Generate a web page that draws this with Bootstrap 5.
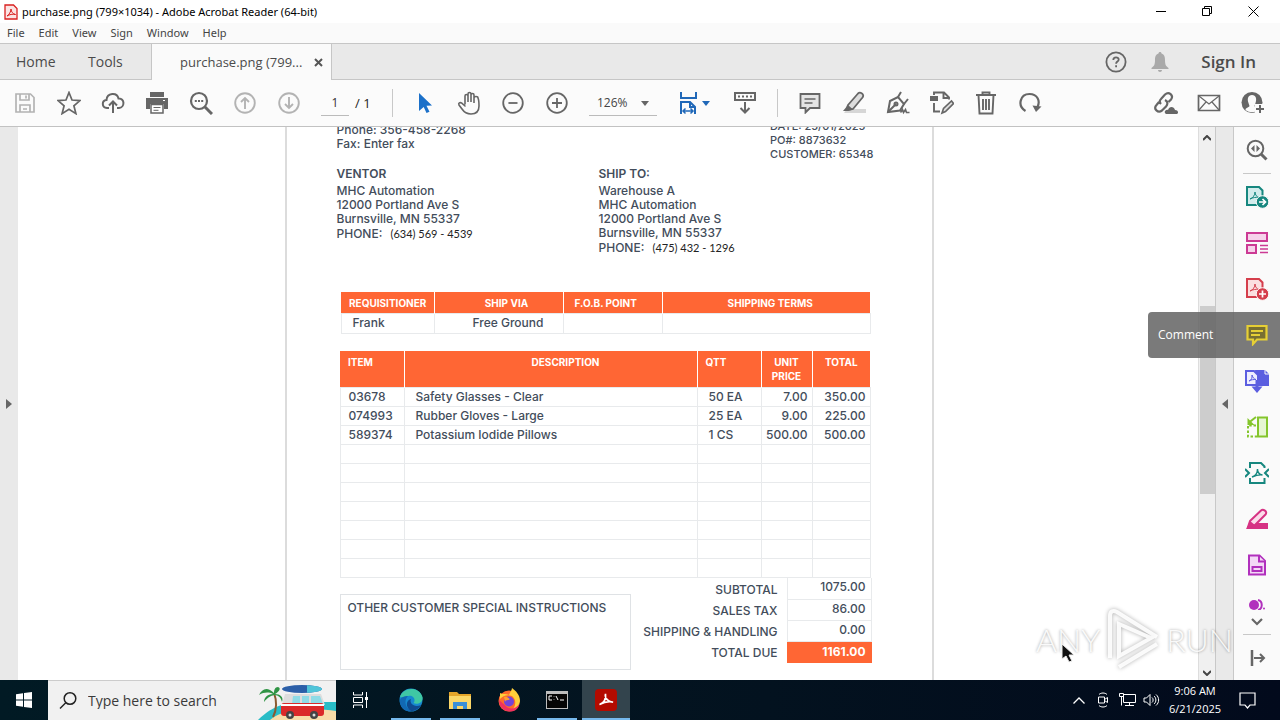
<!DOCTYPE html>
<html lang="en">
<head>
<meta charset="utf-8">
<meta name="viewport" content="width=device-width, initial-scale=1">
<title>purchase.png - Adobe Acrobat Reader</title>
<link href="https://cdn.jsdelivr.net/npm/bootstrap@5.3.0/dist/css/bootstrap.min.css" rel="stylesheet">
<style>
  body { font-family: "Open Sans", "Noto Sans", sans-serif; font-size: 11px; line-height: 16px; color: #222; background: #fff; }
  button, input, select { font: inherit; color: inherit; border: 0; background: none; padding: 0; }
  svg { display: block; flex: none; }
  a { color: inherit; text-decoration: none; }

  /* window chrome */
  .title-bar { height: 23px; color: #000; font-family: "Noto Sans", sans-serif; }
  .win-btn { width: 46px; height: 22px; display: flex; align-items: center; justify-content: center; }
  .menu-bar { height: 20px; background: #fafafa; color: #444; gap: 14px; font-family: "Noto Sans", sans-serif; padding-left: 7px; }
  .tab-bar { height: 37px; background: #e9e9e9; border-top: 1px solid #c6c6c6; border-bottom: 1px solid #c6c6c6; font-size: 14px; color: #4b4b4b; }
  .tab-open { width: 181px; background: #fafafa; border-left: 1px solid #c6c6c6; border-right: 1px solid #c6c6c6; margin-bottom: -1px; padding: 0 8px 0 28px; font-size: 13px; }
  .sign-in { font-weight: 600; font-size: 17px; }
  .tool-bar { height: 47px; background: #fbfbfb; border-bottom: 1px solid #c2c2c2; padding: 0 5px 0 3px; color: #666; }
  .tool-btn { width: 44px; height: 40px; display: flex; align-items: center; justify-content: center; flex: none; }
  .dim { color: #b3b3b3; }
  .rule-v { width: 1px; height: 28px; background: #c8c8c8; margin: 0 10px; flex: none; }
  .page-input { width: 28px; height: 26px; text-align: center; border-bottom: 1px solid #bbb; color: #333; font-size: 12px; margin-left: 10px; border-radius: 0; }
  .page-total { width: 20px; margin: 0 7px 0 6px; font-size: 13px; color: #222; white-space: nowrap; }
  .zoom-select { width: 68px; height: 26px; padding-left: 8px; border-bottom: 1px solid #bbb; appearance: none; color: #444; font-size: 12px; border-radius: 0; }
  .zoom-box { position: relative; margin: 0 9px 0 10px; }
  .zoom-box svg { position: absolute; right: 8px; top: 11px; }

  /* document area */
  .side-strip { width: 18px; background: #e9e9e9; flex: none; color: #666; }
  .side-strip.right { border-left: 1px solid #c8c8c8; border-right: 1px solid #c8c8c8; width: 19px; }
  .canvas { background: #fff; padding-left: 2px; overflow: hidden; min-width: 0; }
  .sheet { width: 649px; height: 600px; border: solid #dcdcdc; border-width: 0 2px; font-family: Inter, sans-serif; font-size: 12px; line-height: 14px; font-weight: 450; color: #434d5b; padding-left: 50px; }
  .sheet-head { margin-top: -8px; height: 48px; padding-right: 58px; }
  .sheet-head .order { font-size: 11px; font-weight: 500; }
  .party { width: 262px; }
  .party h2 { font-size: 12px; line-height: 14px; font-weight: 600; margin: 0 0 3px; color: inherit; }
  .phone { margin-top: 1px; }
  .hand { font-family: Lato, sans-serif; font-size: 11px; color: #222; font-weight: 400; margin-left: 5px; }
  .grid-table { border-collapse: collapse; table-layout: fixed; margin-left: 3px; }
  .grid-table th { background: #ff6634; color: #fff; font-size: 10px; line-height: 14px; font-weight: 700; text-align: center; vertical-align: top; border-left: 1px solid #fff; }
  .grid-table th:first-child { border-left: 0; }
  .grid-table td { border: 1px solid #e8eaec; height: 19px; padding: 0 5px; line-height: 14px; }
  .grid-table .inset { padding-left: 11px; }
  .req { width: 530px; margin: 37px 0 0 4px; }
  .req th { height: 21px; padding: 4px 8px 0; }
  .req td { height: 20px; }
  .items { width: 531px; margin-top: 17px; }
  .items th { height: 37px; padding: 4px 8px 0; }
  .items .desc-head { padding-left: 38px; }
  .items .amount { text-align: right; padding-right: 4px; padding-left: 0; }
  .notes { width: 291px; height: 76px; border: 1px solid #dfe2e5; padding: 6px 7px; margin: 16px 0 0 3px; white-space: nowrap; }
  .totals { border-collapse: collapse; width: 241px; }
  .totals th { font-weight: inherit; text-align: right; padding: 3px 9px 0 0; height: 21px; }
  .totals td { width: 84px; text-align: right; border: 1px solid #e8eaec; border-top: 0; padding: 0 5px 2px 0; height: 21px; }
  .totals .due { background: #ff6634; color: #fff; font-weight: 700; border-color: #ff6634; padding-bottom: 0; }

  .scroll-col { width: 17px; background: #f0f0f0; border-left: 1px solid #ddd; flex: none; }
  .scroll-grip { background: #cdcdcd; height: 188px; width: 15px; }
  .gap-above { flex: 15 0 0; }
  .gap-below { flex: 16 0 0; }
  .tools-pane { width: 46px; background: #fafafa; flex: none; }
  .pane-btn { width: 46px; height: 46px; display: flex; align-items: center; justify-content: center; flex: none; position: relative; }
  .pane-rule { width: 28px; height: 1px; background: #c8c8c8; flex: none; }
  .pane-btn.active { background: #7a7a7a; }
  .hint { position: absolute; right: 46px; top: 0; width: 86px; height: 46px; line-height: 46px; padding-left: 10px; text-align: left; font-size: 12px; color: #fff; background: rgba(100,100,100,.86); border-radius: 4px 0 0 4px; }

  /* desktop */
  .task-bar { height: 40px; background: linear-gradient(90deg, #011a24, #03121f 60%, #020a1c); color: #fff; }
  .task-btn { width: 48px; height: 40px; display: flex; align-items: center; justify-content: center; border-bottom: 2px solid transparent; padding-top: 2px; flex: none; }
  .task-btn.view { margin-right: 7px; }
  .task-btn.open { width: 40px; margin: 0 5px 0 4px; border-color: #76b9ed; }
  .task-btn.front { background: #33444d; border-color: #76b9ed; }
  .search-box { width: 288px; background: #f1f1f1; color: #333; overflow: hidden; border-top: 1px solid #ccc; }
  .search-box input { font-size: 14px; width: 160px; outline: 0; }
  .search-box input::placeholder { color: #3a3a3a; opacity: 1; }
  .tray { margin-right: 9px; }
  .tray-btn { width: 24px; height: 40px; display: flex; align-items: center; justify-content: center; }
  .clock { width: 60px; line-height: 18px; margin-left: 2px; margin-right: -2px; white-space: nowrap; }
  .brand-mark { position: absolute; right: 47px; bottom: 48px; gap: 4px; font-family: Lato, sans-serif; font-weight: 300; font-size: 32px; line-height: 62px; color: rgba(255,255,255,.9); text-shadow: 0 0 3px rgba(0,0,0,.4); pointer-events: none; }
  .brand-mark svg { filter: drop-shadow(0 0 2px rgba(0,0,0,.35)); }
  .pointer { position: absolute; right: 206px; bottom: 57px; pointer-events: none; }
</style>
</head>
<body>
<div class="vh-100 d-flex flex-column overflow-hidden position-relative">

  <header class="title-bar d-flex align-items-center flex-shrink-0">
    <svg class="ms-1 me-1" width="14" height="16" viewBox="0 0 14 16"><path d="M1 1h8.500L13 4.500V15H1z" fill="#fbe4e4" stroke="#d9201f" stroke-width="1.300"/><path d="M3 12c2-1 4-4.500 4-7 .2 3 2 5 4.500 5.500C8.500 9.800 5.500 10.500 3 12z" fill="none" stroke="#d9201f"/></svg>
    <span>purchase.png (799×1034) - Adobe Acrobat Reader (64-bit)</span>
    <div class="ms-auto d-flex me-1">
      <button class="win-btn" aria-label="Minimize"><svg width="11" height="11"><path d="M0 5.500h10" stroke="#000"/></svg></button>
      <button class="win-btn" aria-label="Restore"><svg width="11" height="11" fill="none" stroke="#000"><path d="M.5 2.500h7v7h-7zM2.500 2.500v-2h7v7h-2"/></svg></button>
      <button class="win-btn" aria-label="Close"><svg width="11" height="11" stroke="#000"><path d="M.5.5l10 10M10.500.5l-10 10"/></svg></button>
    </div>
  </header>

  <nav class="menu-bar d-flex align-items-center flex-shrink-0">
    <a href="#">File</a><a href="#">Edit</a><a href="#">View</a><a href="#">Sign</a><a href="#">Window</a><a href="#">Help</a>
  </nav>

  <nav class="tab-bar d-flex flex-shrink-0">
    <a href="#" class="d-flex align-items-center ps-3" style="width:88px">Home</a>
    <a href="#" class="d-flex align-items-center" style="width:63px">Tools</a>
    <div class="tab-open d-flex align-items-center justify-content-between">
      <span>purchase.png (799...</span>
      <button aria-label="Close tab"><svg width="9" height="9" stroke="#555" stroke-width="2"><path d="M1 1l7 7M8 1L1 8"/></svg></button>
    </div>
    <div class="ms-auto d-flex align-items-center pe-4">
      <button aria-label="Help" class="me-4"><svg width="22" height="22" fill="none" stroke="#666" stroke-width="1.800"><circle cx="11" cy="11" r="9.600"/><path d="M8.300 9c0-3.600 5.600-3.400 5.400-.3-.1 1.900-2.600 1.900-2.600 4"/><path d="M11.100 14.300v2"/></svg></button>
      <button aria-label="Notifications" class="me-4"><svg width="18" height="20" fill="#a9a9a9"><path d="M9 0c1 0 1.500.7 1.500 1.500C13.500 2.500 14 5 14 8c0 5 1 6 3.500 8v1H.5v-1C3 14 4 13 4 8c0-3 .5-5.500 3.500-6.500C7.500.7 8 0 9 0zM7 18h4c0 2.500-4 2.500-4 0z"/></svg></button>
      <a href="#" class="sign-in ms-2">Sign In</a>
    </div>
  </nav>

  <div class="tool-bar d-flex align-items-center flex-shrink-0">
    <button class="tool-btn dim" aria-label="Save"><svg width="22" height="22" fill="none" stroke="currentColor" stroke-width="1.700"><path d="M2 2h14.500L20 5.500V20H2z"/><path d="M6 2v6h9V2M6 20v-7h10v7M12 3.500v3M9 17h4"/></svg></button>
    <button class="tool-btn" aria-label="Star"><svg width="24" height="24" fill="none" stroke="currentColor" stroke-width="1.700"><path d="M12 1.500l3 7.500 8 .6-6.100 5.200 2 7.800-6.900-4.300-6.900 4.300 2-7.800L1 9.600 9 9z"/></svg></button>
    <button class="tool-btn" aria-label="Upload"><svg width="24" height="24" fill="none" stroke="currentColor" stroke-width="2"><path d="M8 17H6c-5.500-.5-5.500-7.500-.5-8C6 1.500 16 1 17.500 7.500c6.500-.5 6.500 9 .5 9.500h-2M12 22V11M8 14.500l4-4 4 4"/></svg></button>
    <button class="tool-btn" aria-label="Print"><svg width="24" height="24" fill="currentColor"><path d="M5 1h14v5H5zM1 7h22v11h-4v-5H5v5H1z"/><path d="M6 13.500h12V22H6z" fill="#fff" stroke="currentColor" stroke-width="1.500"/><path d="M8.500 16.500h7M8.500 19.300h5" stroke="currentColor"/><path d="M18 9.500h2" stroke="#fff"/></svg></button>
    <button class="tool-btn" aria-label="Find"><svg width="24" height="24" fill="none" stroke="currentColor" stroke-width="2.200"><circle cx="10" cy="10" r="8"/><path d="M16 16l7 7" stroke-width="3"/><path d="M5.800 10h2M9 10h2M12.200 10h2" stroke-width="2"/></svg></button>
    <button class="tool-btn dim" aria-label="Previous page"><svg width="22" height="22" fill="none" stroke="currentColor" stroke-width="1.900"><circle cx="11" cy="11" r="9.800"/><path d="M11 17V6M7 10l4-4 4 4"/></svg></button>
    <button class="tool-btn dim" aria-label="Next page"><svg width="22" height="22" fill="none" stroke="currentColor" stroke-width="1.900"><circle cx="11" cy="11" r="9.800"/><path d="M11 5v11M7 12l4 4 4-4"/></svg></button>
    <input class="page-input" type="text" value="1" aria-label="Page number">
    <span class="page-total">/ 1</span>
    <div class="rule-v"></div>
    <button class="tool-btn" aria-label="Select"><svg width="16" height="22" fill="#1b70c9"><path d="M2 1l13 12.500-5.500.3 3 6-3 1.200-2.800-6L2 19z"/></svg></button>
    <button class="tool-btn" aria-label="Pan"><svg width="24" height="24" fill="none" stroke="currentColor" stroke-width="1.600" stroke-linecap="round"><path d="M8 13V5c0-2 3-2 3 0v6V3c0-2 3-2 3 0v8V4c0-2 3-2 3 0v8-5c0-2 4-2 4 0 1 2 1 5 1 8 0 5-3 8-8 8-4 0-7-2-9-5l-3-4c-1-2 1-3 2.500-2L8 15"/></svg></button>
    <button class="tool-btn" aria-label="Zoom out"><svg width="22" height="22" fill="none" stroke="currentColor" stroke-width="1.800"><circle cx="11" cy="11" r="9.800"/><path d="M6.500 11h9"/></svg></button>
    <button class="tool-btn" aria-label="Zoom in"><svg width="22" height="22" fill="none" stroke="currentColor" stroke-width="1.800"><circle cx="11" cy="11" r="9.800"/><path d="M6 11h10M11 6v10"/></svg></button>
    <div class="zoom-box">
      <select class="zoom-select" aria-label="Zoom level"><option>126%</option></select>
      <svg width="8" height="5"><path d="M0 0h8L4 5z" fill="#666"/></svg>
    </div>
    <button class="tool-btn" aria-label="Fit width"><svg width="18" height="24" fill="none" stroke="#2068b8" stroke-width="2"><path d="M2 1v6h15V1M2 23V11h9l5 5v7M11 11v5h5"/><path d="M4 20h10M6.500 17.500L4 20l2.500 2.500M11.500 17.500L14 20l-2.500 2.500" stroke-width="1.500"/></svg></button>
    <svg width="8" height="5" style="margin:0 13px 0 -8px"><path d="M0 0h8L4 5z" fill="#2068b8"/></svg>
    <button class="tool-btn" aria-label="Hide toolbar"><svg width="24" height="24" fill="none" stroke="currentColor" stroke-width="2"><path d="M2 2h20v7H2z"/><path d="M5 5.500h14" stroke-dasharray="2 2"/><path d="M12 11v10M7.500 17l4.500 4.500 4.500-4.500"/></svg></button>
    <div class="rule-v"></div>
    <button class="tool-btn" aria-label="Comment"><svg width="22" height="22" fill="#e4e4e4" stroke="currentColor" stroke-width="1.800"><path d="M1.500 2h19v14H11l-4.500 4.500V16h-5z"/><path d="M5.500 7h11M5.500 11h8" stroke-width="1.500"/></svg></button>
    <button class="tool-btn" aria-label="Highlight"><svg width="24" height="24"><path d="M5 18h19v4H2z" fill="#d6d6d6"/><path d="M6 14L16 2.500c2-2 7 .5 4.500 4L11 18l-5 1-1-2z" fill="#ddd" stroke="currentColor" stroke-width="1.800"/><path d="M6 14l5 4.500L6 20H1z" fill="currentColor"/></svg></button>
    <button class="tool-btn" aria-label="Sign"><svg width="24" height="24" fill="none" stroke="currentColor" stroke-width="2"><path d="M2 21l2-11 8-4 6 7-4 6.500z"/><path d="M2 21l8-8M12 6l3-5M18 13l4-5" /><circle cx="10" cy="13" r="1.500"/><path d="M14.500 21.500l2-3 1 3 2-3 1 3h3" stroke-width="1.600"/></svg></button>
    <button class="tool-btn" aria-label="Edit"><svg width="24" height="24" fill="none" stroke="currentColor" stroke-width="1.900"><path d="M4 4V1.500h10l5 5v2M13.500 2v5H18M4 12v8.500h6"/><path d="M0 5h8v5H0z" fill="currentColor" stroke="none"/><path d="M12 22l1.500-4.500 8-7.500 2 2.500-8 8z" fill="#ddd" stroke-width="1.600"/></svg></button>
    <button class="tool-btn" aria-label="Delete"><svg width="22" height="24" fill="none" stroke="currentColor" stroke-width="1.900"><path d="M1 4h20M7.500 4V1.500h7V4M3.500 4l1 18.500h13l1-18.500M8 8v11M11 8v11M14 8v11"/></svg></button>
    <button class="tool-btn" aria-label="Rotate"><svg width="24" height="24" fill="none" stroke="currentColor" stroke-width="2.200"><path d="M7.500 20C-1 15 2 3 11.500 3c8 0 11 7 8 13"/><path d="M14.500 14.500l9 1-5.500 5.500z" fill="currentColor" stroke="none"/></svg></button>
    <div class="ms-auto d-flex">
      <button class="tool-btn" aria-label="Share link"><svg width="26" height="24" fill="none" stroke="currentColor" stroke-width="2.200"><path d="M9 13c-2-2-1-4 0-5l4-4.500c4-3.500 9 1 6 5L16.500 11M13 9c3 1.500 3 4 1 6.500l-4 4c-4 3-9-1.500-5.500-5.500L7 11"/><path d="M14 23c-3-2 0-5 2-4 1-4 6-4 7 0 3 0 4 3 2 4z" fill="currentColor" stroke="none"/></svg></button>
      <button class="tool-btn" aria-label="Mail"><svg width="24" height="18" fill="none" stroke="currentColor" stroke-width="1.700"><path d="M1.500 1.500h21v15h-21z"/><path d="M2 2l10 8 10-8M2 16l7-8M22 16l-7-8" stroke-width="1.200"/></svg></button>
      <button class="tool-btn" aria-label="Add people"><svg width="24" height="24"><circle cx="11" cy="11.500" r="10.500" fill="currentColor"/><path d="M11 4c-4 0-5 4-3.500 8l1 3c-1 2-4 1.500-4 4 4 3 9 3 13 0 0-2.500-3-2-4-4l1-3C16 8 15 4 11 4z" fill="#fbfbfb"/><path d="M14 13h10v10H14z" fill="#fbfbfb"/><path d="M19 14v8M15 18h8" stroke="currentColor" stroke-width="2"/></svg></button>
    </div>
  </div>

  <main class="d-flex flex-grow-1 overflow-hidden">
    <button class="side-strip d-flex align-items-center justify-content-center" aria-label="Show navigation pane"><svg width="6" height="10"><path d="M0 0v10l6-5z" fill="currentColor"/></svg></button>

    <section class="canvas flex-grow-1">
      <article class="sheet mx-auto">
        <div class="sheet-head d-flex justify-content-between">
          <div class="pt-1">Phone: 356-458-2268<br>Fax: Enter fax</div>
          <div class="order">DATE: 25/01/2025<br>PO#: 8873632<br>CUSTOMER: 65348</div>
        </div>
        <div class="d-flex">
          <div class="party"><h2>VENTOR</h2>MHC Automation<br>12000 Portland Ave S<br>Burnsville, MN 55337<div class="phone">PHONE: <span class="hand">(634) 569 - 4539</span></div></div>
          <div class="party"><h2>SHIP TO:</h2>Warehouse A<br>MHC Automation<br>12000 Portland Ave S<br>Burnsville, MN 55337<div class="phone">PHONE: <span class="hand">(475) 432 - 1296</span></div></div>
        </div>

        <table class="grid-table req">
          <colgroup><col style="width:93px"><col style="width:129px"><col style="width:99px"><col></colgroup>
          <thead><tr><th>REQUISITIONER</th><th class="ps-4">SHIP VIA</th><th class="text-start inset">F.O.B. POINT</th><th class="ps-3">SHIPPING TERMS</th></tr></thead>
          <tbody><tr><td class="inset">Frank</td><td class="text-center ps-4">Free Ground</td><td></td><td></td></tr></tbody>
        </table>

        <table class="grid-table items">
          <colgroup><col style="width:64px"><col><col style="width:64px"><col style="width:51px"><col style="width:58px"></colgroup>
          <thead><tr><th class="text-start">ITEM</th><th class="desc-head">DESCRIPTION</th><th class="text-start">QTT</th><th>UNIT PRICE</th><th>TOTAL</th></tr></thead>
          <tbody>
            <tr><td class="ps-2">03678</td><td class="inset">Safety Glasses - Clear</td><td class="inset">50 EA</td><td class="amount">7.00</td><td class="amount">350.00</td></tr>
            <tr><td class="ps-2">074993</td><td class="inset">Rubber Gloves - Large</td><td class="inset">25 EA</td><td class="amount">9.00</td><td class="amount">225.00</td></tr>
            <tr><td class="ps-2">589374</td><td class="inset">Potassium Iodide Pillows</td><td class="inset">1 CS</td><td class="amount">500.00</td><td class="amount">500.00</td></tr>
            <tr><td></td><td></td><td></td><td></td><td></td></tr>
            <tr><td></td><td></td><td></td><td></td><td></td></tr>
            <tr><td></td><td></td><td></td><td></td><td></td></tr>
            <tr><td></td><td></td><td></td><td></td><td></td></tr>
            <tr><td></td><td></td><td></td><td></td><td></td></tr>
            <tr><td></td><td></td><td></td><td></td><td></td></tr>
            <tr><td></td><td></td><td></td><td></td><td></td></tr>
          </tbody>
        </table>

        <div class="d-flex align-items-start">
          <div class="notes">OTHER CUSTOMER SPECIAL INSTRUCTIONS</div>
          <table class="totals">
            <tr><th>SUBTOTAL</th><td>1075.00</td></tr>
            <tr><th>SALES TAX</th><td>86.00</td></tr>
            <tr><th class="text-nowrap">SHIPPING &amp; HANDLING</th><td>0.00</td></tr>
            <tr><th>TOTAL DUE</th><td class="due">1161.00</td></tr>
          </table>
        </div>
      </article>
    </section>

    <div class="scroll-col d-flex flex-column align-items-center">
      <svg class="mt-2" width="8" height="6" fill="none" stroke="#444" stroke-width="2"><path d="M0 5l4-4 4 4"/></svg>
      <div class="gap-above"></div>
      <div class="scroll-grip"></div>
      <div class="gap-below"></div>
      <svg class="mb-1" width="8" height="6" fill="none" stroke="#444" stroke-width="2"><path d="M0 1l4 4 4-4"/></svg>
    </div>
    <button class="side-strip right d-flex align-items-center justify-content-center" aria-label="Hide tools pane"><svg width="6" height="10"><path d="M6 0v10L0 5z" fill="currentColor"/></svg></button>

    <aside class="tools-pane d-flex flex-column align-items-center">
      <button class="pane-btn" aria-label="Search tools"><svg width="22" height="22" fill="none" stroke="#666" stroke-width="2"><circle cx="9.500" cy="9.500" r="7.800"/><path d="M15 15l5.500 5.500" stroke-width="3"/><path d="M8.500 6v7L5 9.500zM10.500 6v7L14 9.500z" fill="#666" stroke="none"/></svg></button>
      <div class="pane-rule"></div>
      <button class="pane-btn" aria-label="Export PDF"><svg width="24" height="24"><path d="M2 2h12l3.500 3.500V20H2z" fill="#d3ecec" stroke="#16877f" stroke-width="2"/><path d="M5 14c3-1 5-4 5-7 0 3 2 5 4 5.500-3-.5-6 0-9 1.500z" fill="none" stroke="#16877f"/><circle cx="17.500" cy="17" r="6.300" fill="#16877f" stroke="#fafafa"/><path d="M14 17h6M17.500 14l3 3-3 3" fill="none" stroke="#fff" stroke-width="1.700"/></svg></button>
      <button class="pane-btn" aria-label="Organize pages"><svg width="24" height="24" fill="#f6d2ea" stroke="#cc3a94" stroke-width="2"><path d="M2 2h20v8H2zM2 14h9v8H2z"/><path d="M15 14.500h8M15 18h8M15 21.500h8" stroke-width="1.300"/></svg></button>
      <button class="pane-btn" aria-label="Create PDF"><svg width="24" height="24"><path d="M2 2h12l3.500 3.500V20H2z" fill="#fbdfe0" stroke="#d53e4c" stroke-width="2"/><path d="M5 14c3-1 5-4 5-7 0 3 2 5 4 5.500-3-.5-6 0-9 1.500z" fill="none" stroke="#d53e4c"/><circle cx="17.500" cy="17" r="6.300" fill="#d53e4c" stroke="#fafafa"/><path d="M14 17h7M17.500 13.500v7" stroke="#fff" stroke-width="1.700"/></svg></button>
      <button class="pane-btn active" aria-label="Comment"><svg width="22" height="22" fill="#786f32" stroke="#e6cf35" stroke-width="2.200"><path d="M1.500 2h19v13.500H11L7 20v-4.500H1.500z"/><path d="M5 7h12M5 11h9" stroke-width="1.800"/></svg><span class="hint">Comment</span></button>
      <button class="pane-btn" aria-label="Combine files"><svg width="26" height="26"><path d="M11 2h10l4 4v12H13z" fill="#5b5ee0"/><path d="M21 1v5h5" fill="none" stroke="#fafafa"/><path d="M2 3h8l4 4v10H2z" fill="#eeeefe" stroke="#5b5ee0" stroke-width="2"/><path d="M5 13c3-1 3-3 3-6 1 3 2 4 4 4.500-2 0-5 0-7 1.500z" fill="none" stroke="#5b5ee0"/><path d="M13 12v9" stroke="#5b5ee0" stroke-width="3"/><path d="M7.500 18.500h11L13 25z" fill="#5b5ee0"/></svg></button>
      <button class="pane-btn" aria-label="Rotate pages"><svg width="24" height="24" fill="none" stroke="#84c52c" stroke-width="2"><path d="M13 2.500h9v19h-9z" fill="#e6f6d3"/><path d="M11 10.500H3v11h9" stroke-dasharray="2.500 1.800"/><path d="M11 2L4 7.500"/><path d="M2.500 3v7h7z" fill="#84c52c" stroke="none"/></svg></button>
      <button class="pane-btn" aria-label="Compress PDF"><svg width="24" height="24" fill="none" stroke="#16877f" stroke-width="2"><path d="M5 7V2h11l3.500 3.500V7M5 17v5h14.500v-5M0 8l4 4-4 4M24 8l-4 4 4 4"/><path d="M7 16c3-1 5.500-4 5.500-8 0 4 2 5.500 5 6-4-.5-7 .5-10.500 2z" stroke-width="1.400"/></svg></button>
      <button class="pane-btn" aria-label="Redact"><svg width="24" height="22"><path d="M5 15h18v6H1z" fill="#d63384"/><path d="M5 13L16 2.500c2-2 7 1 4.500 4L10 17l-7 2z" fill="#fbdcea" stroke="#d63384" stroke-width="2"/><path d="M5 13l5 4-8 3z" fill="#d63384"/></svg></button>
      <button class="pane-btn" aria-label="Fill and sign"><svg width="20" height="22" fill="#f3d8f6" stroke="#b130bd" stroke-width="2"><path d="M2 1.500h10.500L18 7v13.500H2z"/><path d="M12 2v5.500h6M5.500 13h9v4h-9z"/></svg></button>
      <button class="pane-btn align-items-end" aria-label="More tools" style="height:22px"><svg width="18" height="11"><circle cx="6" cy="6" r="5" fill="#b130bd"/><path d="M10 1c5 1 5 9 0 10" fill="none" stroke="#b130bd" stroke-width="2"/><circle cx="16" cy="9.500" r="1" fill="#b130bd"/></svg></button>
      <button class="mt-1 pt-1" aria-label="Scroll down"><svg width="14" height="8" fill="none" stroke="#666" stroke-width="2.200"><path d="M2 1l5 5 5-5"/></svg></button>
      <div class="pane-rule mt-2"></div>
      <button class="pane-btn" aria-label="Collapse pane"><svg width="18" height="18" fill="none" stroke="#666" stroke-width="2"><path d="M4 1v16" stroke-width="2.500"/><path d="M6 9h10M12 5l4 4-4 4"/></svg></button>
    </aside>
  </main>

  <footer class="task-bar d-flex flex-shrink-0">
    <button class="task-btn" aria-label="Start"><svg width="16" height="16" fill="#fff"><path d="M0 2.300L7 1.200v6.300H0zM8 1l8-1v7.500H8zM0 8.500h7v6.300l-7-1.100zM8 8.500h8V16l-8-1z"/></svg></button>
    <label class="search-box d-flex align-items-center">
      <svg class="ms-2 me-2" width="24" height="20" fill="none" stroke="#222" stroke-width="1.500"><circle cx="14" cy="7.500" r="5.800"/><path d="M10 11.500l-6 6"/></svg>
      <input type="text" placeholder="Type here to search" aria-label="Search">
      <svg class="ms-auto" width="78" height="39"><path d="M0 39c15-15 30-18 42-18h36v18z" fill="#29bcc6"/><path d="M12 39c12-12 46-12 66-9v9z" fill="#f8dca8"/><path d="M15 36c4-8 4-16 1-24" fill="none" stroke="#8a5a30" stroke-width="2"/><path d="M16 12C9 5 4 8 1 14c5-3 10-3 14-1-6 0-9 4-9 8 4-5 7-6 10-7 5 0 7 3 8 7 2-5-2-8-7-8 5-3 6-6 3-7-3 0-4 3-4 6z" fill="#2f9444"/><path d="M24 24l3-11h36l4 11z" fill="#ddd"/><path d="M35 15h7v8h-8zM44 15h7v8h-7zM53 15h9l3 8H53z" fill="#8edbe6"/><rect x="23" y="22" width="43" height="13" rx="3" fill="#db2929"/><path d="M23 24h43" stroke="#fff" stroke-width="2"/><circle cx="32" cy="34" r="4" fill="#444"/><circle cx="56" cy="34" r="4" fill="#444"/><circle cx="32" cy="34" r="1.500" fill="#ddd"/><circle cx="56" cy="34" r="1.500" fill="#ddd"/><ellipse cx="44" cy="8" rx="20" ry="4" fill="#2c5fa8"/><path d="M49 4.200C57 4.500 64 6 64 8s-7 3.500-15 3.800z" fill="#4fc4d8"/></svg>
    </label>
    <button class="task-btn view" aria-label="Task view"><svg width="17" height="16" fill="none" stroke="#fff"><path d="M1.500 0v3h9V0M1.500 16v-3h9v3M1.500 5.500h9v5h-9zM14.500 0v16"/><path d="M13 5h3v3h-3z" fill="#fff" stroke="none"/></svg></button>
    <button class="task-btn open ms-0" aria-label="Edge"><svg width="24" height="24"><circle cx="12" cy="12" r="11.500" fill="#1689d0"/><path d="M1 9C4-1 20-2 23.500 9c1 6-6 8-9 6 3-4-1-8-5-7-4 0-7 2-8.500 1z" fill="#3fc7a4"/><path d="M9 8c-5 5-2 13 4 15-8 2-13-5-12-11 1-3 5-4 8-4z" fill="#1268b3"/><path d="M12 11c-2 4 3 9 10 6-2 4-6 6-10 6-6-4-5-11 0-12z" fill="#0f4a8f"/></svg></button>
    <button class="task-btn open" aria-label="File Explorer"><svg width="22" height="19"><path d="M0 1h8l2 2h12v14H0z" fill="#e4a52a"/><path d="M0 5h22v13H0z" fill="#fbd768"/><path d="M4 18v-7h14v7h-4v-3H8v3z" fill="#3a8fd6"/></svg></button>
    <button class="task-btn" aria-label="Firefox"><svg width="24" height="24"><circle cx="12" cy="13" r="10.500" fill="#ff6b2b"/><path d="M3 5c3 2 5 0 9 2 1-3 3-5 3-7 4 3 8 7 8 13-1 7-5 10-9 10 5-4 6-11 1-15-5-2-9 0-12 3z" fill="#ffcf3a"/><path d="M2 12c0 8 6 12 12 11.500 5 0 8-4 8.500-8-3 5-8 6-12 4z" fill="#f0315f"/><circle cx="12" cy="13.500" r="5" fill="#7444d8"/><path d="M7 9c3-1 4 1 6 2-2 2-4 0-5 3z" fill="#ff9f2e"/></svg></button>
    <button class="task-btn open" aria-label="Command Prompt"><svg width="22" height="18"><path d="M0 0h22v18H0z" fill="#bdbdbd"/><path d="M1 3h20v14H1z" fill="#050505"/><path d="M6 5H3v4h3M8 5.500v.5M8 8.500V9M10 5l2 4M14 9h4" fill="none" stroke="#fff"/></svg></button>
    <button class="task-btn front" aria-label="Acrobat Reader"><svg width="22" height="22"><rect width="22" height="22" rx="4" fill="#b30b00"/><path d="M4.500 15.500c4-1 7-5.500 6-10.500-1 4 3 8.500 7.500 8-4-1-9 0-13.500 2.500z" fill="none" stroke="#fff" stroke-width="1.700"/></svg></button>

    <div class="tray ms-auto d-flex align-items-center">
      <button class="tray-btn" aria-label="Show hidden icons"><svg width="12" height="7" fill="none" stroke="#fff" stroke-width="1.300"><path d="M.5 6.500L6 1l5.500 5.500"/></svg></button>
      <button class="tray-btn" aria-label="Meet now"><svg width="12" height="16" fill="none" stroke="#fff"><path d="M1.500 5h6v6h-6zM7.500 7.500l3-2v5l-3-2M2 2.500c2-2 6-2 8 0M2 13.500c2 2 6 2 8 0"/></svg></button>
      <button class="tray-btn" aria-label="Network"><svg width="17" height="14" fill="none" stroke="#fff"><path d="M4.500 1.500h12v8h-12zM10.500 9.500v3M6 12.500h9M.5.5h4v3h-4zM2.500 3.500v9"/></svg></button>
      <button class="tray-btn" aria-label="Volume"><svg width="17" height="14" fill="none" stroke="#fff"><path d="M1 5h2.500L7 1.500v11L3.500 9H1zM9 4.500c1.500 1 1.500 4 0 5M11 3c2.500 2 2.500 6 0 8M13 1.500c3.500 3 3.500 8 0 11"/></svg></button>
      <div class="clock text-center">9:06 AM<br>6/21/2025</div>
      <button class="task-btn" aria-label="Notifications"><svg width="17" height="17" fill="none" stroke="#fff" stroke-width="1.200"><path d="M1 1h15v12h-5l-2.500 3L6 13H1z"/></svg></button>
    </div>
  </footer>

  <div class="brand-mark d-flex align-items-center"><span>ANY</span>
    <svg width="58" height="64" fill="none" stroke="rgba(255,255,255,.9)" stroke-width="4"><path d="M6 50V8c0-5 3-6 7-4l40 25M15 16v32l32-18zM15 59l38-23"/></svg>
    <span>RUN</span></div>
  <svg class="pointer" width="13" height="20"><path d="M1 1v15l4-3 3 6 3-1-3-6h5z" fill="#111" stroke="#eee"/></svg>
</div>
<script src="https://cdn.jsdelivr.net/npm/bootstrap@5.3.0/dist/js/bootstrap.bundle.min.js"></script>
</body>
</html>
